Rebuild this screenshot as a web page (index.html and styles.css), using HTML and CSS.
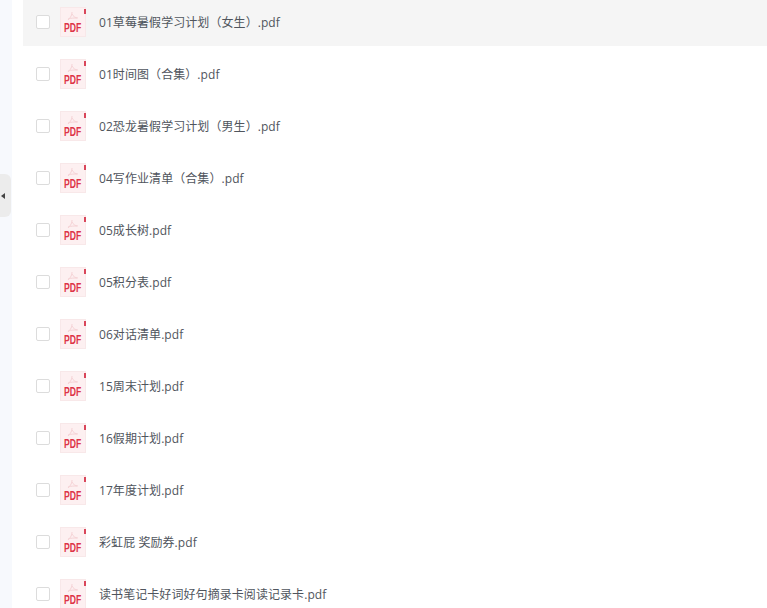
FILE: index.html
```html
<!DOCTYPE html>
<html lang="zh">
<head>
    <meta charset="UTF-8">
    <meta name="viewport" content="width=device-width, initial-scale=1.0">
    <title>文件列表</title>
    <link rel="stylesheet" href="styles.css">
</head>
<body>
    <div class="layout">
        <div class="side">
            <div class="side-handle"><span class="side-arrow"></span></div>
        </div>
        <ul class="file-list">
            <li class="file-row active">
                <span class="check"></span>
                <span class="pdf-icon"><svg class="pdf-art" width="27" height="31" viewBox="0 0 27 31"><path d="M12 5c0 3-1 5-4 8M12 7c1 2 3 4 6 4M8 12c3-1 6-1 9-1" fill="none" stroke="#f6d3d6" stroke-width="1"/><rect x="24" y="2" width="2" height="5" fill="#d9465a"/></svg><span class="pdf-label">PDF</span></span>
                <span class="file-name">01草莓暑假学习计划（女生）.pdf</span>
            </li>
            <li class="file-row">
                <span class="check"></span>
                <span class="pdf-icon"><svg class="pdf-art" width="27" height="31" viewBox="0 0 27 31"><path d="M12 5c0 3-1 5-4 8M12 7c1 2 3 4 6 4M8 12c3-1 6-1 9-1" fill="none" stroke="#f6d3d6" stroke-width="1"/><rect x="24" y="2" width="2" height="5" fill="#d9465a"/></svg><span class="pdf-label">PDF</span></span>
                <span class="file-name">01时间图（合集）.pdf</span>
            </li>
            <li class="file-row">
                <span class="check"></span>
                <span class="pdf-icon"><svg class="pdf-art" width="27" height="31" viewBox="0 0 27 31"><path d="M12 5c0 3-1 5-4 8M12 7c1 2 3 4 6 4M8 12c3-1 6-1 9-1" fill="none" stroke="#f6d3d6" stroke-width="1"/><rect x="24" y="2" width="2" height="5" fill="#d9465a"/></svg><span class="pdf-label">PDF</span></span>
                <span class="file-name">02恐龙暑假学习计划（男生）.pdf</span>
            </li>
            <li class="file-row">
                <span class="check"></span>
                <span class="pdf-icon"><svg class="pdf-art" width="27" height="31" viewBox="0 0 27 31"><path d="M12 5c0 3-1 5-4 8M12 7c1 2 3 4 6 4M8 12c3-1 6-1 9-1" fill="none" stroke="#f6d3d6" stroke-width="1"/><rect x="24" y="2" width="2" height="5" fill="#d9465a"/></svg><span class="pdf-label">PDF</span></span>
                <span class="file-name">04写作业清单（合集）.pdf</span>
            </li>
            <li class="file-row">
                <span class="check"></span>
                <span class="pdf-icon"><svg class="pdf-art" width="27" height="31" viewBox="0 0 27 31"><path d="M12 5c0 3-1 5-4 8M12 7c1 2 3 4 6 4M8 12c3-1 6-1 9-1" fill="none" stroke="#f6d3d6" stroke-width="1"/><rect x="24" y="2" width="2" height="5" fill="#d9465a"/></svg><span class="pdf-label">PDF</span></span>
                <span class="file-name">05成长树.pdf</span>
            </li>
            <li class="file-row">
                <span class="check"></span>
                <span class="pdf-icon"><svg class="pdf-art" width="27" height="31" viewBox="0 0 27 31"><path d="M12 5c0 3-1 5-4 8M12 7c1 2 3 4 6 4M8 12c3-1 6-1 9-1" fill="none" stroke="#f6d3d6" stroke-width="1"/><rect x="24" y="2" width="2" height="5" fill="#d9465a"/></svg><span class="pdf-label">PDF</span></span>
                <span class="file-name">05积分表.pdf</span>
            </li>
            <li class="file-row">
                <span class="check"></span>
                <span class="pdf-icon"><svg class="pdf-art" width="27" height="31" viewBox="0 0 27 31"><path d="M12 5c0 3-1 5-4 8M12 7c1 2 3 4 6 4M8 12c3-1 6-1 9-1" fill="none" stroke="#f6d3d6" stroke-width="1"/><rect x="24" y="2" width="2" height="5" fill="#d9465a"/></svg><span class="pdf-label">PDF</span></span>
                <span class="file-name">06对话清单.pdf</span>
            </li>
            <li class="file-row">
                <span class="check"></span>
                <span class="pdf-icon"><svg class="pdf-art" width="27" height="31" viewBox="0 0 27 31"><path d="M12 5c0 3-1 5-4 8M12 7c1 2 3 4 6 4M8 12c3-1 6-1 9-1" fill="none" stroke="#f6d3d6" stroke-width="1"/><rect x="24" y="2" width="2" height="5" fill="#d9465a"/></svg><span class="pdf-label">PDF</span></span>
                <span class="file-name">15周末计划.pdf</span>
            </li>
            <li class="file-row">
                <span class="check"></span>
                <span class="pdf-icon"><svg class="pdf-art" width="27" height="31" viewBox="0 0 27 31"><path d="M12 5c0 3-1 5-4 8M12 7c1 2 3 4 6 4M8 12c3-1 6-1 9-1" fill="none" stroke="#f6d3d6" stroke-width="1"/><rect x="24" y="2" width="2" height="5" fill="#d9465a"/></svg><span class="pdf-label">PDF</span></span>
                <span class="file-name">16假期计划.pdf</span>
            </li>
            <li class="file-row">
                <span class="check"></span>
                <span class="pdf-icon"><svg class="pdf-art" width="27" height="31" viewBox="0 0 27 31"><path d="M12 5c0 3-1 5-4 8M12 7c1 2 3 4 6 4M8 12c3-1 6-1 9-1" fill="none" stroke="#f6d3d6" stroke-width="1"/><rect x="24" y="2" width="2" height="5" fill="#d9465a"/></svg><span class="pdf-label">PDF</span></span>
                <span class="file-name">17年度计划.pdf</span>
            </li>
            <li class="file-row">
                <span class="check"></span>
                <span class="pdf-icon"><svg class="pdf-art" width="27" height="31" viewBox="0 0 27 31"><path d="M12 5c0 3-1 5-4 8M12 7c1 2 3 4 6 4M8 12c3-1 6-1 9-1" fill="none" stroke="#f6d3d6" stroke-width="1"/><rect x="24" y="2" width="2" height="5" fill="#d9465a"/></svg><span class="pdf-label">PDF</span></span>
                <span class="file-name">彩虹屁 奖励券.pdf</span>
            </li>
            <li class="file-row">
                <span class="check"></span>
                <span class="pdf-icon"><svg class="pdf-art" width="27" height="31" viewBox="0 0 27 31"><path d="M12 5c0 3-1 5-4 8M12 7c1 2 3 4 6 4M8 12c3-1 6-1 9-1" fill="none" stroke="#f6d3d6" stroke-width="1"/><rect x="24" y="2" width="2" height="5" fill="#d9465a"/></svg><span class="pdf-label">PDF</span></span>
                <span class="file-name">读书笔记卡好词好句摘录卡阅读记录卡.pdf</span>
            </li>
        </ul>
    </div>
</body>
</html>
```

FILE: styles.css
```css
html, body {
    margin: 0;
    height: 100%;
    overflow: hidden;
    background: #fff;
}
body {
    font-family: "Open Sans", "Noto Sans CJK SC", sans-serif;
    font-size: 12px;
    letter-spacing: 0.07px;
    color: #50555d;
}
.layout {
    display: flex;
    height: 608px;
}
.side {
    position: relative;
    width: 12px;
    margin-right: 11px;
    flex-shrink: 0;
    background: #f7f9fd;
}
.side-handle {
    position: absolute;
    top: 174px;
    left: 0;
    width: 11px;
    height: 43px;
    display: flex;
    align-items: center;
    background: #ececec;
    border-radius: 0 6px 6px 0;
}
.side-arrow {
    margin-left: 1px;
    border-style: solid;
    border-width: 3.5px 4px 3.5px 0;
    border-color: transparent #444 transparent transparent;
}
.file-list {
    flex: 1;
    list-style: none;
    margin: -6px 0 0;
    padding: 0;
}
.file-row {
    display: flex;
    align-items: center;
    box-sizing: border-box;
    height: 52px;
    padding: 4px 0 0 13px;
}
.file-row.active {
    background: #f5f5f5;
}
.check {
    width: 12px;
    height: 12px;
    background: #fff;
    border: 1px solid #dcdcdc;
    border-radius: 2px;
    flex-shrink: 0;
}
.pdf-icon {
    position: relative;
    width: 26px;
    height: 30px;
    margin-left: 10px;
    background: #fdf0f1;
    border: 1px solid #f8e8e9;
    box-sizing: border-box;
    flex-shrink: 0;
}
.pdf-art {
    position: absolute;
    top: -1px;
    left: -1px;
}
.pdf-label {
    position: absolute;
    left: 3px;
    bottom: 2px;
    font-family: "Liberation Sans", sans-serif;
    font-size: 12px;
    line-height: 12px;
    font-weight: bold;
    letter-spacing: 0;
    color: #dd3448;
    transform: scaleX(0.72);
    transform-origin: left bottom;
}
.file-name {
    margin-left: 13px;
    white-space: nowrap;
}
```
